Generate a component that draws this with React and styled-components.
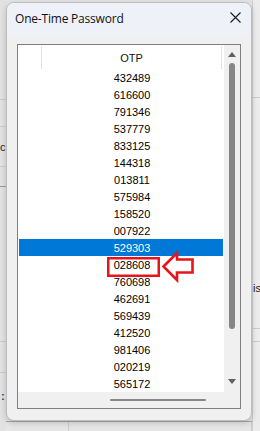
import React from "react";
import styled, { createGlobalStyle } from "styled-components";

const GlobalStyle = createGlobalStyle`
  html, body {
    margin: 0;
    padding: 0;
    background: #e6e6e6;
  }
  body {
    font-family: "Liberation Sans", Arial, sans-serif;
  }
`;

const otps = [
  "432489", "616600", "791346", "537779", "833125", "144318", "013811",
  "575984", "158520", "007922", "529303", "028608", "760698", "462691",
  "569439", "412520", "981406", "020219", "565172",
];

const SELECTED = 10;
const MARKED = 11;

const leftLines = [100, 127, 167, 187, 342, 373];
const rightLines = [98, 329, 342];

const OtpDialog = () => {
  return (
    <Desktop>
      <GlobalStyle />
      <Strip className="left">
        {leftLines.map((y, i) => (
          <StripCell key={y} $h={y - (leftLines[i - 1] || 0)} $dark={y === 187} />
        ))}
        <Glyph className="c">c</Glyph>
        <Glyph className="colon">:</Glyph>
      </Strip>

      <Window>
        <TitleBar>
          <Title>One-Time Password</Title>
          <Close aria-label="close">
            <svg width="11" height="11" viewBox="0 0 11 11">
              <path d="M0.5 0.5 L10.5 10.5 M10.5 0.5 L0.5 10.5" stroke="#1a1a1a" strokeWidth="1.1" />
            </svg>
          </Close>
        </TitleBar>

        <Body>
          <ListBox>
            <Content>
              <Header>
                <HeaderCell />
                <HeaderCell $main>OTP</HeaderCell>
              </Header>
              {otps.map((otp, i) => (
                <Row key={otp} $selected={i === SELECTED}>
                  <Spacer />
                  <Value>{otp}</Value>
                  {i === MARKED && (
                    <>
                      <MarkBox />
                      <Arrow width="34" height="32" viewBox="0 0 34 32">
                        <polygon
                          points="1.5,15.5 15,2 15,8.5 30.5,8.5 30.5,21.5 15,21.5 15,29"
                          fill="#fff"
                          stroke="#e8141c"
                          strokeWidth="2.6"
                          strokeLinejoin="miter"
                        />
                      </Arrow>
                    </>
                  )}
                </Row>
              ))}
            </Content>

            <VScroll>
              <Tri $up />
              <VThumb />
              <Tri />
            </VScroll>

            <HScroll>
              <HThumb />
            </HScroll>
            <Corner />
          </ListBox>
        </Body>
      </Window>

      <Strip className="right">
        {rightLines.map((y, i) => (
          <StripCell key={y} $h={y - (rightLines[i - 1] || 0)} />
        ))}
        <Glyph className="is">is</Glyph>
      </Strip>

      <BottomBand>
        <BandCell $w={63} />
        <BandCell $w={183} />
      </BottomBand>
    </Desktop>
  );
};

const Desktop = styled.div`
  position: relative;
  width: 260px;
  height: 431px;
  overflow: hidden;
  display: grid;
  grid-template-columns: 6px 246px 8px;
  grid-template-rows: 2px 419px 10px;
  background: #e4e4e4;
`;

const Strip = styled.div`
  position: relative;
  grid-row: 1 / 4;
  display: flex;
  flex-direction: column;
  overflow: hidden;
  background: #e2e2e2;

  &.left {
    grid-column: 1;
  }
  &.right {
    grid-column: 3;
    border-left: 1px solid #cfcfcf;
    background: #ececec;
  }
`;

const StripCell = styled.div`
  flex: none;
  height: ${(p) => p.$h}px;
  box-sizing: border-box;
  border-bottom: 1px solid ${(p) => (p.$dark ? "#9a9a9a" : "#cacaca")};
`;

const Glyph = styled.span`
  position: absolute;
  font-family: "Liberation Sans", Arial, sans-serif;
  font-size: 11px;
  color: #222;

  &.c {
    left: 0;
    top: 141px;
  }
  &.colon {
    left: 1px;
    top: 390px;
    color: #1f3f7a;
    font-weight: bold;
  }
  &.is {
    left: 0;
    top: 282px;
  }
`;

const BottomBand = styled.div`
  grid-column: 2;
  grid-row: 3;
  display: flex;
  border-top: 1px solid #a8a8a8;
  background: #e6e6e6;
`;

const BandCell = styled.div`
  width: ${(p) => p.$w}px;
  border-right: 1px solid #cdcdcd;
`;

const Window = styled.div`
  grid-column: 2;
  grid-row: 2;
  position: relative;
  z-index: 1;
  display: flex;
  flex-direction: column;
  box-sizing: border-box;
  border: 1px solid #bdbdbd;
  border-radius: 8px;
  background: #f0f0f0;
  overflow: hidden;
  box-shadow: 0 2px 6px rgba(0, 0, 0, 0.18);
`;

const TitleBar = styled.div`
  height: 31px;
  flex: none;
  display: flex;
  align-items: center;
  justify-content: space-between;
  padding: 0 9px 0 8px;
  background: #eef2f8;
`;

const Title = styled.span`
  font-family: "Open Sans", "Noto Sans", sans-serif;
  font-size: 12px;
  color: #111;
  letter-spacing: -0.2px;
`;

const Close = styled.span`
  display: flex;
  align-items: center;
  justify-content: center;
  width: 14px;
  height: 14px;
  margin-top: -2px;
`;

const Body = styled.div`
  flex: 1;
  display: flex;
  padding: 10px 10px 12px 10px;
`;

const ListBox = styled.div`
  flex: 1;
  display: grid;
  grid-template-columns: 1fr 16px;
  grid-template-rows: 1fr 16px;
  border: 1px solid #7f7f82;
  background: #f0f0f0;
`;

const Content = styled.div`
  background: #fff;
  display: flex;
  flex-direction: column;
`;

const Header = styled.div`
  height: 24px;
  flex: none;
  display: grid;
  grid-template-columns: 24px 180px;
  padding-top: 1px;
  box-sizing: border-box;
`;

const HeaderCell = styled.div`
  display: flex;
  align-items: center;
  justify-content: center;
  border-right: 1px solid #e3e3e3;
  font-size: 11px;
  color: #111;
`;

const Row = styled.div`
  position: relative;
  height: 17px;
  flex: none;
  display: grid;
  grid-template-columns: 24px 180px;
  align-items: center;
  margin: 0 1px;
  background: ${(p) => (p.$selected ? "#0078d7" : "transparent")};
  color: ${(p) => (p.$selected ? "#fff" : "#000")};
  font-size: 11px;
`;

const Spacer = styled.span``;

const Value = styled.span`
  text-align: center;
  margin-left: -2px;
`;

const MarkBox = styled.span`
  position: absolute;
  left: 88px;
  top: 1px;
  width: 53px;
  height: 20px;
  box-sizing: border-box;
  border: 2px solid #e8141c;
  box-shadow: inset 0 0 0 0.5px #e8141c;
`;

const Arrow = styled.svg`
  position: absolute;
  left: 143px;
  top: -5px;
  overflow: visible;
`;

const VScroll = styled.div`
  display: flex;
  flex-direction: column;
  align-items: center;
  padding-top: 7px;
  background: #f0f0f0;
`;

const Tri = styled.span`
  width: 0;
  height: 0;
  border-left: 4px solid transparent;
  border-right: 4px solid transparent;
  ${(p) =>
    p.$up
      ? "border-bottom: 5px solid #606060; margin-bottom: 6px;"
      : "border-top: 5px solid #606060; margin-top: 50px;"}
`;

const VThumb = styled.span`
  width: 6px;
  height: 266px;
  border-radius: 3px;
  background: #868686;
`;

const HScroll = styled.div`
  display: flex;
  align-items: center;
  padding-left: 92px;
  background: #f0f0f0;
`;

const HThumb = styled.span`
  width: 96px;
  height: 2px;
  border-radius: 1px;
  background: #868686;
`;

const Corner = styled.div`
  background: #f0f0f0;
`;

export default OtpDialog;
